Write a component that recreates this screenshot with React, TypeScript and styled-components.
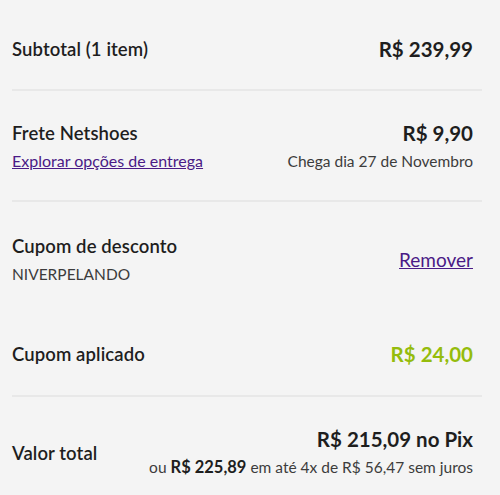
import React from "react";
import styled, { createGlobalStyle } from "styled-components";

const GlobalStyle = createGlobalStyle`
  html, body {
    margin: 0;
    padding: 0;
    background: #f4f4f4;
  }
  body {
    font-family: Lato, "Liberation Sans", sans-serif;
    color: #1e1e1e;
  }
`;

const Summary = styled.div`
  width: 500px;
  padding: 0 18px 0 12px;
  box-sizing: border-box;
`;

const Section = styled.section<{ $divided?: boolean; $top: number; $bottom: number }>`
  padding: ${(p) => p.$top}px 9px ${(p) => p.$bottom}px 0;
  border-bottom: ${(p) => (p.$divided ? "2px solid #e8e8e8" : "none")};
`;

const Row = styled.div`
  display: flex;
  justify-content: space-between;
  align-items: center;
`;

const Col = styled.div<{ $right?: boolean }>`
  display: flex;
  flex-direction: column;
  gap: 2px;
  align-items: ${(p) => (p.$right ? "flex-end" : "flex-start")};
  text-align: ${(p) => (p.$right ? "right" : "left")};
`;

const Label = styled.span`
  font-size: 18.5px;
  line-height: 26px;
  font-weight: 600;
  letter-spacing: 0.1px;
  color: #1e1e1e;
`;

const Price = styled.span<{ $green?: boolean }>`
  font-size: 20.5px;
  line-height: 26px;
  font-weight: 700;
  color: ${(p) => (p.$green ? "#95bc0c" : "#1e1e1e")};
`;

const Note = styled.span`
  font-size: 15.5px;
  line-height: 26px;
  color: #3c3c3c;
`;

const Strong = styled.b`
  font-size: 16.5px;
  font-weight: 700;
  color: #1e1e1e;
`;

const Link = styled.a<{ $large?: boolean }>`
  font-size: ${(p) => (p.$large ? 19 : 16)}px;
  line-height: 26px;
  color: #4a1a86;
  text-decoration: underline;
  cursor: pointer;
`;

export default function App() {
  return (
    <>
      <GlobalStyle />
      <Summary>
        <Section $divided $top={36} $bottom={27}>
          <Row>
            <Label>Subtotal (1 item)</Label>
            <Price>R$ 239,99</Price>
          </Row>
        </Section>

        <Section $divided $top={29} $bottom={26}>
          <Row>
            <Col>
              <Label>Frete Netshoes</Label>
              <Link>Explorar opções de entrega</Link>
            </Col>
            <Col $right>
              <Price>R$ 9,90</Price>
              <Note>Chega dia 27 de Novembro</Note>
            </Col>
          </Row>
        </Section>

        <Section $top={31} $bottom={0}>
          <Row>
            <Col>
              <Label>Cupom de desconto</Label>
              <Note>NIVERPELANDO</Note>
            </Col>
            <Link $large>Remover</Link>
          </Row>
        </Section>

        <Section $divided $top={54} $bottom={28}>
          <Row>
            <Label>Cupom aplicado</Label>
            <Price $green>R$ 24,00</Price>
          </Row>
        </Section>

        <Section $top={29} $bottom={14}>
          <Row>
            <Label>Valor total</Label>
            <Col $right>
              <Price>R$ 215,09 no Pix</Price>
              <Note>
                ou <Strong>R$ 225,89</Strong> em até 4x de R$ 56,47 sem juros
              </Note>
            </Col>
          </Row>
        </Section>
      </Summary>
    </>
  );
}
